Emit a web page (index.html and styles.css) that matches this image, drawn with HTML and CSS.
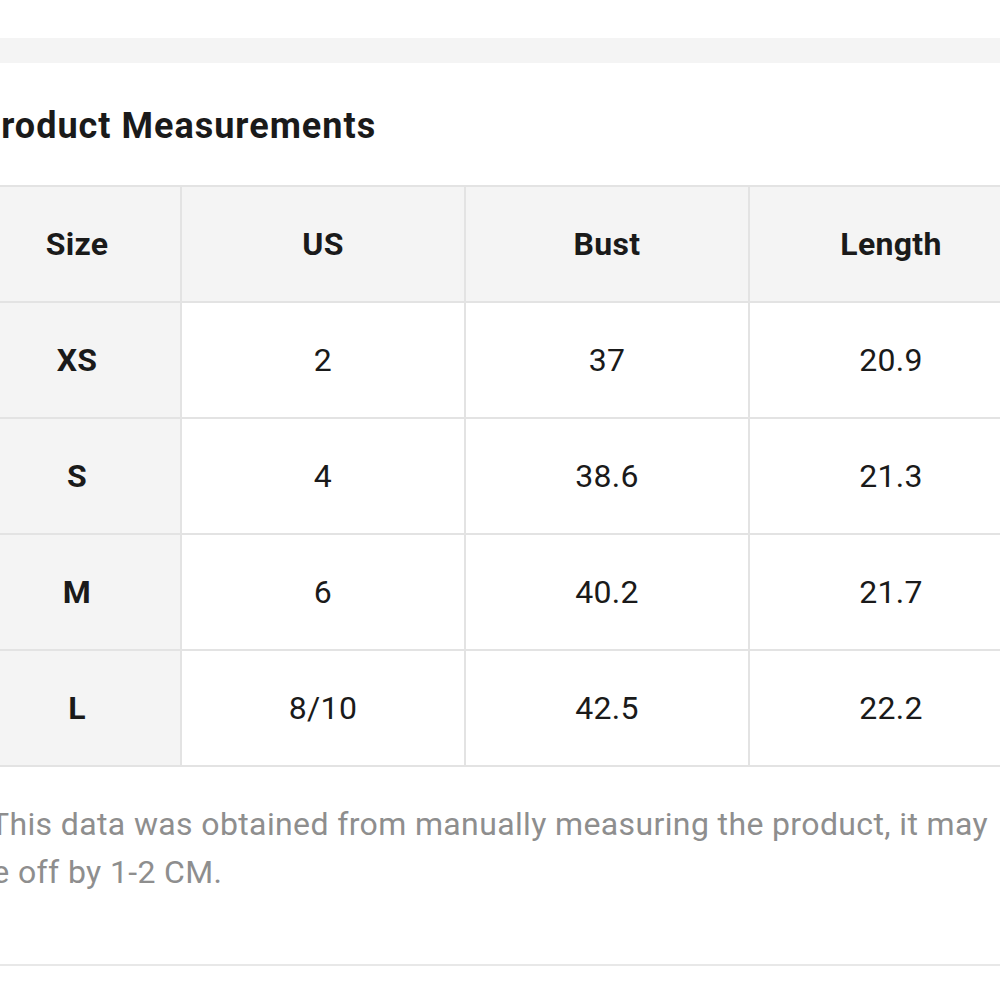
FILE: index.html
```html
<!DOCTYPE html>
<html lang="en">
<head>
<meta charset="utf-8">
<title>Product Measurements</title>
<link rel="stylesheet" href="styles.css">
</head>
<body>
<div class="page">
  <div class="top-gap"></div>
  <div class="band"></div>
  <section class="card">
    <h2 class="title">Product Measurements</h2>
    <table class="sizes">
      <colgroup>
        <col class="c-size"><col class="c-val"><col class="c-val"><col class="c-val">
      </colgroup>
      <thead>
        <tr><th class="key">Size</th><th>US</th><th>Bust</th><th>Length</th></tr>
      </thead>
      <tbody>
        <tr><th class="key">XS</th><td>2</td><td>37</td><td>20.9</td></tr>
        <tr><th class="key">S</th><td>4</td><td>38.6</td><td>21.3</td></tr>
        <tr><th class="key">M</th><td>6</td><td>40.2</td><td>21.7</td></tr>
        <tr><th class="key">L</th><td>8/10</td><td>42.5</td><td>22.2</td></tr>
      </tbody>
    </table>
    <p class="note">This data was obtained from manually measuring the product, it may be off by 1-2 CM.</p>
  </section>
  <div class="rule"></div>
</div>
</body>
</html>
```

FILE: styles.css
```css
html, body {
  margin: 0;
  padding: 0;
  background: #ffffff;
  overflow: hidden;
}
body {
  font-family: Roboto, "Liberation Sans", Arial, sans-serif;
  color: #1c1c1c;
}
.page {
  width: 1060px;
  margin-left: -28px;
}
.top-gap {
  height: 38px;
}
.band {
  height: 25px;
  background: #f4f4f4;
}
.card {
  display: flow-root;
}
.title {
  margin: 43px 0 0 5px;
  font-size: 36px;
  line-height: 40px;
  letter-spacing: 1px;
  font-weight: 700;
  color: #1a1a1a;
}
.sizes {
  margin-top: 39px;
  width: 1060px;
  table-layout: fixed;
  border-collapse: collapse;
  font-size: 32px;
  letter-spacing: 0.3px;
}
.c-size { width: 208px; }
.c-val { width: 284px; }
.sizes th, .sizes td {
  height: 114px;
  padding: 0;
  border: 2px solid #e3e3e3;
  text-align: center;
  vertical-align: middle;
  color: #1a1a1a;
}
.sizes th {
  font-weight: 700;
}
.sizes thead th,
.sizes .key {
  background: #f4f4f4;
}
.sizes td {
  font-weight: 400;
  background: #ffffff;
}
.note {
  margin: 33px 0 68px 2px;
  text-indent: 16px;
  font-size: 32px;
  line-height: 48px;
  letter-spacing: 0.37px;
  color: #8e8e8e;
  width: 1026px;
}
.rule {
  height: 2px;
  background: #e8e8e8;
}
```
